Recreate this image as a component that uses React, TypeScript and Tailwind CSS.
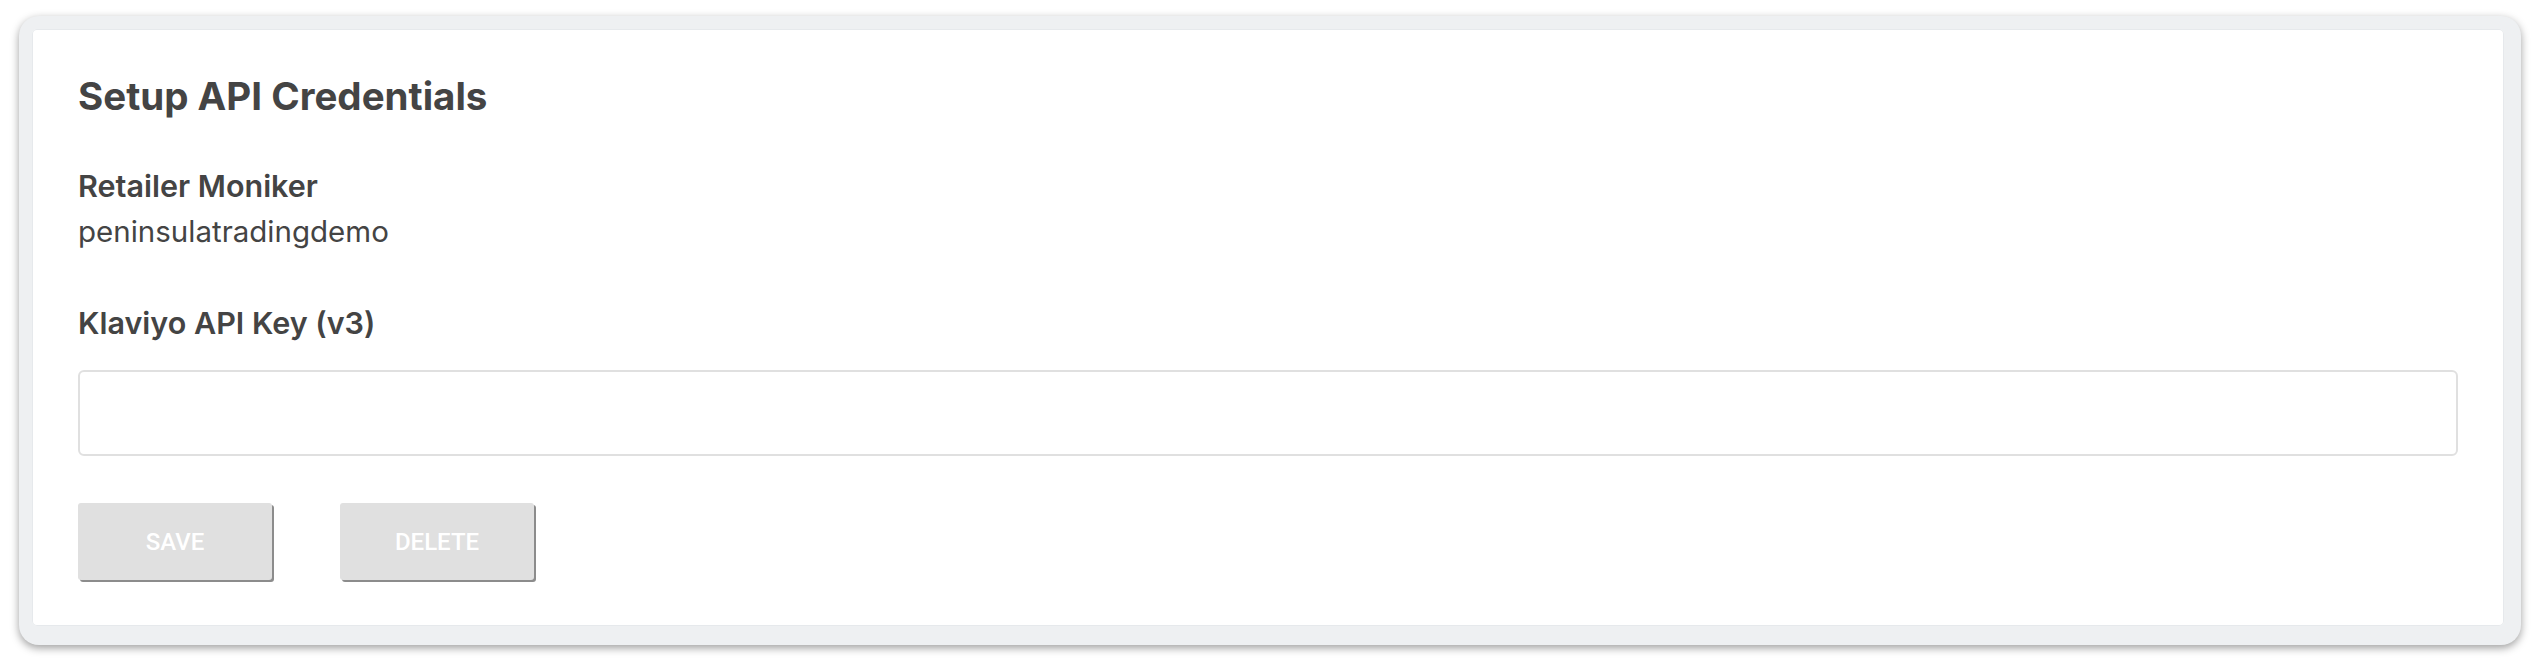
export default function App() {
  return (
    <div className="min-h-[671px] w-full bg-white pt-4 px-[19px] font-['Inter',sans-serif] text-[#444444]">
      <div className="rounded-[20px] bg-[#eef0f2] pt-[13px] pl-[13px] pr-[17px] pb-[19px] shadow-[0_3px_9px_rgba(0,0,0,0.38)]">
        <div className="flex flex-col rounded-[5px] bg-white pt-[48px] pl-[46px] pr-[46px] pb-[46px] shadow-[inset_0_0_0_1px_#e6e9ec]">
          <h2 className="text-[38.5px] leading-none font-bold text-[#444444]">Setup API Credentials</h2>

          <div className="mt-[55px] text-[30.5px] leading-none font-semibold">Retailer Moniker</div>
          <div className="mt-[16px] text-[29.5px] leading-none font-normal">peninsulatradingdemo</div>

          <label htmlFor="apikey" className="mt-[61px] text-[30.5px] leading-none font-semibold">
            Klaviyo API Key (v3)
          </label>
          <input
            id="apikey"
            type="text"
            className="mt-[32px] h-[86px] w-full rounded-[6px] border-2 border-[#e0e0e0] bg-white px-4 text-[28px] outline-none"
          />

          <div className="mt-[47px] flex gap-[68px]">
            <button className="h-[77px] w-[194px] rounded-[3px] bg-[#e0e0e0] text-[24px] font-medium text-white font-['Roboto',sans-serif] shadow-[2px_2px_0_#8c8c8c]">
              SAVE
            </button>
            <button className="h-[77px] w-[194px] rounded-[3px] bg-[#e0e0e0] text-[24px] font-medium text-white font-['Roboto',sans-serif] shadow-[2px_2px_0_#8c8c8c]">
              DELETE
            </button>
          </div>
        </div>
      </div>
    </div>
  );
}
